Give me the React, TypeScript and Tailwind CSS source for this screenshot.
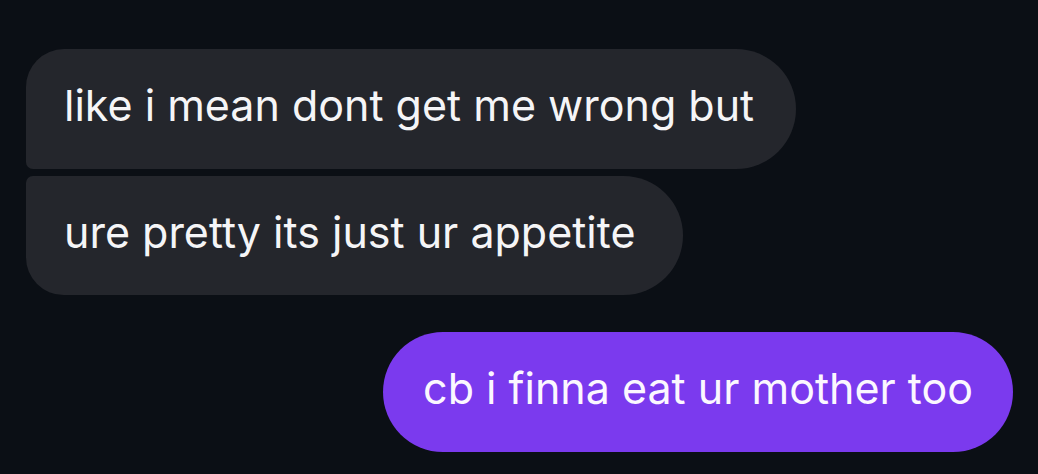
export default function App() {
  return (
    <div
      className="w-[1038px] h-[474px] bg-[#0b0f15] overflow-hidden flex flex-col pt-[49px] pl-[26px] pr-[25px]"
      style={{ fontFamily: "Inter, 'Liberation Sans', sans-serif" }}
    >
      {/* incoming messages, grouped */}
      <div className="flex flex-col items-start gap-[7px]">
        <div className="h-[120px] flex items-center pl-[38px] pr-[42px] pb-[7px] bg-[#24262c] text-[#f5f5f7] text-[43px] leading-normal rounded-tl-[38px] rounded-bl-[7px] rounded-r-[60px]">
          like i mean dont get me wrong but
        </div>
        <div className="h-[119px] flex items-center pl-[38px] pr-[48px] pb-[7px] bg-[#24262c] text-[#f5f5f7] text-[43px] leading-normal rounded-tl-[7px] rounded-bl-[38px] rounded-r-[60px]">
          ure pretty its just ur appetite
        </div>
      </div>
      {/* outgoing message */}
      <div className="flex justify-end mt-[37px]">
        <div className="h-[120px] flex items-center px-[40px] pb-[7px] bg-[#7b3aee] text-[#fbf7ff] text-[43px] leading-normal rounded-[60px]">
          cb i finna eat ur mother too
        </div>
      </div>
    </div>
  );
}
